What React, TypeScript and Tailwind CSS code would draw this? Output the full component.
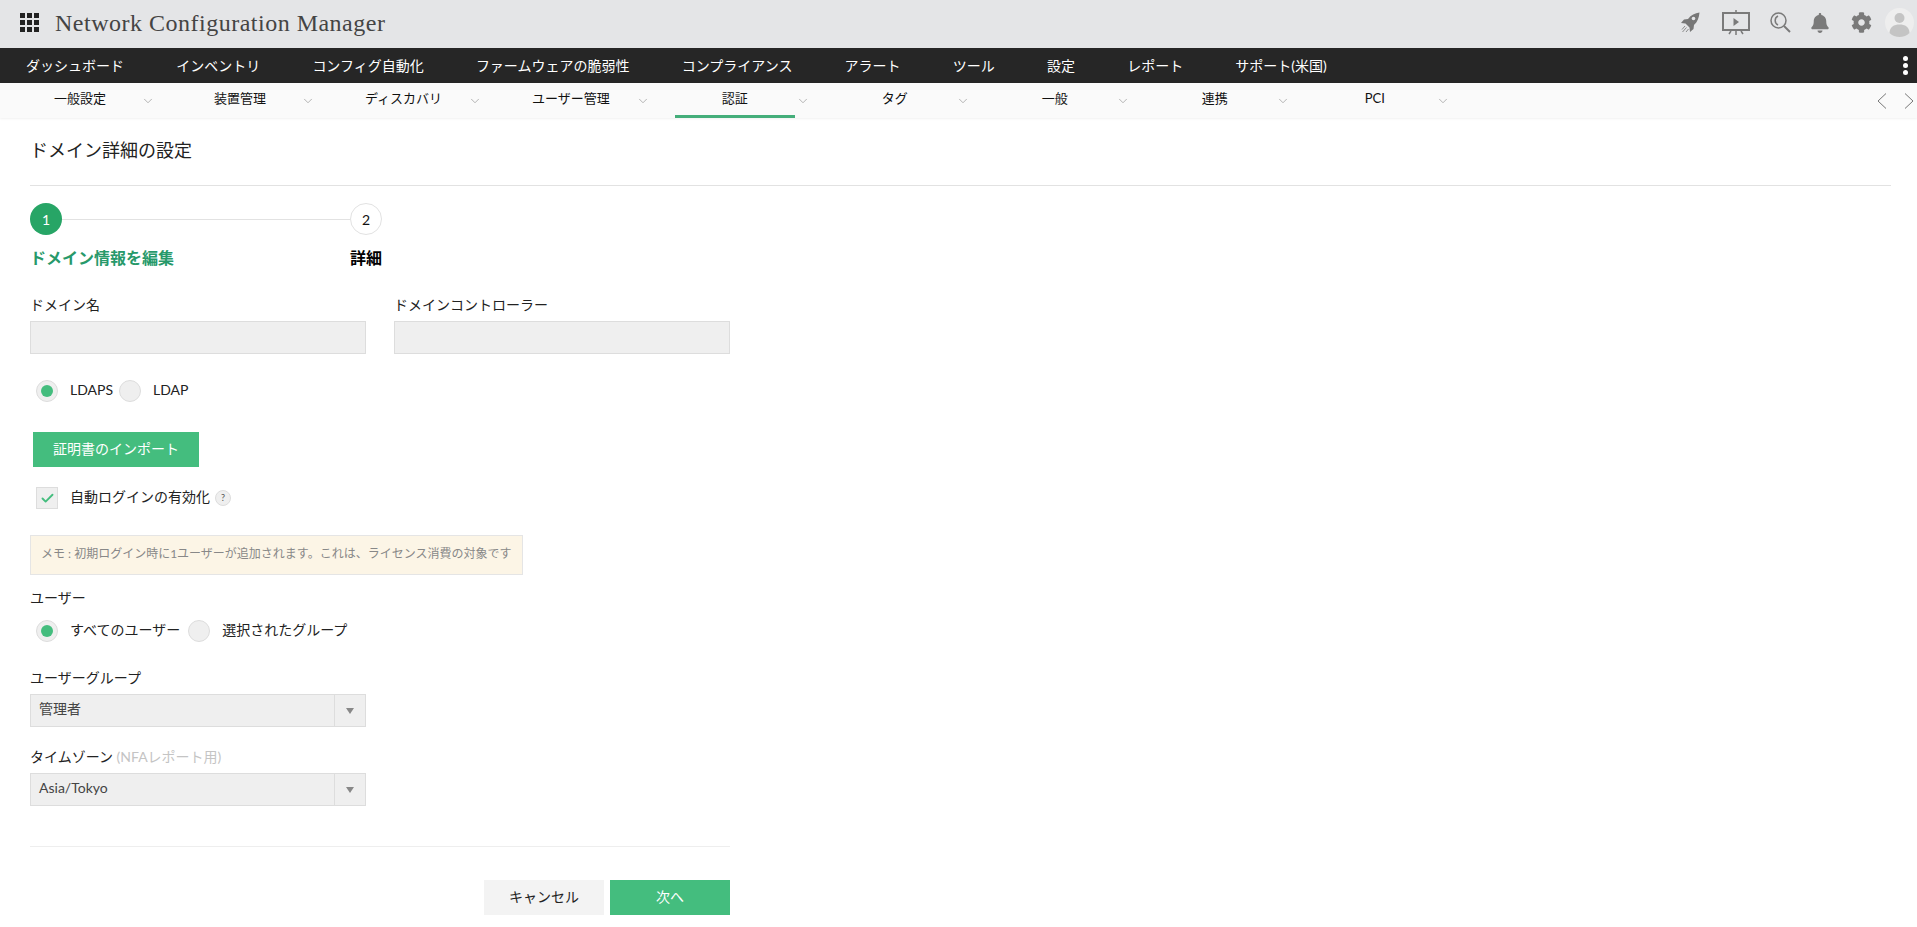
import { FaBell, FaCog } from "react-icons/fa";
import { ChevronDown, Check } from "lucide-react";

const TOP_NAV = [
  "ダッシュボード",
  "インベントリ",
  "コンフィグ自動化",
  "ファームウェアの脆弱性",
  "コンプライアンス",
  "アラート",
  "ツール",
  "設定",
  "レポート",
  "サポート(米国)",
];

const SUB_NAV = ["一般設定", "装置管理", "ディスカバリ", "ユーザー管理", "認証", "タグ", "一般", "連携", "PCI"];

function RocketIcon() {
  return (
    <svg width="20" height="22" viewBox="0 0 20 22" fill="#777777">
      <path d="M19.500 .5C15 1 11 3 8 7L4 7.500 1 11l4.500.5 4 4 .5 4.500 3.500-3 .5-4C17.500 10 19 5.500 19.500 .5z" />
      <circle cx="13.500" cy="6.500" r="1.800" fill="#e4e5e7" />
      <path d="M5 14l-3 3.500M6.500 15.500l-4 4.500M8.500 17l-2.500 3" stroke="#8a8a8a" strokeWidth="1" fill="none" />
    </svg>
  );
}

function PresentationIcon() {
  return (
    <svg width="28" height="26" viewBox="0 0 28 26" fill="none" stroke="#7a7a7a">
      <path d="M14 0v3" strokeWidth="1.500" />
      <rect x="1" y="3" width="26" height="17" strokeWidth="2" />
      <path d="M11.500 8l5.500 4-5.500 4z" fill="#7a7a7a" stroke="none" />
      <path d="M14 20v5M9 21l-2 3M19 21l2 3" strokeWidth="1.500" />
    </svg>
  );
}

function SearchIcon() {
  return (
    <svg width="21" height="21" viewBox="0 0 21 21" fill="none" stroke="#7a7a7a">
      <circle cx="8.500" cy="8.500" r="7.500" strokeWidth="1.500" />
      <path d="M8 4a5 5 0 0 0 0 9" strokeWidth="1.500" />
      <path d="M14 14l6 6" strokeWidth="2" />
    </svg>
  );
}

function AvatarIcon() {
  return (
    <svg width="29" height="29" viewBox="0 0 29 29">
      <circle cx="14.500" cy="14.500" r="14.500" fill="#eeeeee" />
      <circle cx="14.500" cy="10" r="5" fill="#c4c4c4" />
      <path d="M4.500 25c0-6 4.500-8.500 10-8.500s10 2.500 10 8.500c-2.500 2.500-6 4-10 4s-7.500-1.500-10-4z" fill="#c4c4c4" />
    </svg>
  );
}

function PagerArrow({ points }: { points: string }) {
  return (
    <svg width="10" height="16" viewBox="0 0 10 16" fill="none" stroke="#777777">
      <polyline points={points} />
    </svg>
  );
}

function Radio({ checked, label }: { checked?: boolean; label: string }) {
  return (
    <div className="flex h-[22px] items-center">
      <span className="flex h-[22px] w-[22px] items-center justify-center rounded-full border border-[#dddddd] bg-[#efefef]">
        {checked && <span className="h-3 w-3 rounded-full bg-[#44bd7e]" />}
      </span>
      <span className="ml-3 pb-[3px] text-[14px] leading-[16px] text-[#222222]">{label}</span>
    </div>
  );
}

function FieldLabel({ children }: { children: React.ReactNode }) {
  return <div className="h-5 text-[14px] leading-5 text-[#222222]">{children}</div>;
}

function TextBox() {
  return <input aria-label="text" className="mt-[6px] block h-[33px] w-[336px] border border-[#dddddd] bg-[#efefef]" />;
}

function SelectBox({ value }: { value: string }) {
  return (
    <div className="mt-[6px] flex h-[33px] w-[336px] items-center border border-[#dddddd] bg-[#efefef]">
      <span className="flex-1 pb-[3px] pl-2 text-[14px] leading-[16px] text-[#444444]">{value}</span>
      <span className="flex h-full w-[31px] items-center justify-center border-l border-[#dddddd]">
        <span className="h-0 w-0 border-x-[4px] border-t-[6px] border-x-transparent border-t-[#888888]" />
      </span>
    </div>
  );
}

export default function App() {
  return (
    <div className="min-h-screen bg-white font-['Lato','Noto_Sans_CJK_JP',sans-serif]">
      <header className="flex h-12 items-center bg-[#e4e5e7] pb-[3px] pl-5">
        <div className="grid grid-cols-3 gap-[2px]">
          {Array.from({ length: 9 }).map((_, i) => (
            <span key={i} className="h-[5px] w-[5px] bg-[#222222]" />
          ))}
        </div>
        <div className="ml-4 font-['Liberation_Serif',serif] text-[24px] tracking-[0.5px] text-[#444444]">
          Network Configuration Manager
        </div>
        <div className="ml-auto mr-[3px] flex items-center">
          <RocketIcon />
          <span className="ml-[22px]"><PresentationIcon /></span>
          <span className="ml-[20px]"><SearchIcon /></span>
          <FaBell className="ml-[19px] text-[#7a7a7a]" size={20} />
          <FaCog className="ml-[21px] text-[#7a7a7a]" size={21} />
          <span className="ml-[13px]"><AvatarIcon /></span>
        </div>
      </header>

      <nav className="flex h-[35px] items-center gap-[52.200px] bg-[#262626] pl-[26px] text-[14px] text-white">
        {TOP_NAV.map((item) => (
          <span key={item}>{item}</span>
        ))}
        <span className="ml-auto mr-[9px] flex flex-col gap-[2px]">
          <span className="h-[5px] w-[5px] rounded-full bg-white" />
          <span className="h-[5px] w-[5px] rounded-full bg-white" />
          <span className="h-[5px] w-[5px] rounded-full bg-white" />
        </span>
      </nav>

      <div className="flex h-[35px] items-stretch bg-[#fafafa] pl-5 shadow-[0_1px_2px_rgba(0,0,0,0.06)]">
        {SUB_NAV.map((item) => (
          <div key={item} className="flex items-stretch">
            <div
              className={
                "flex min-w-[120px] items-center justify-center border-b-[3px] px-[25px] text-[13px] text-[#111111] " +
                (item === "認証" ? "border-[#44ae7a]" : "border-transparent")
              }
            >
              {item}
            </div>
            <div className="flex w-10 items-center">
              <ChevronDown size={14} strokeWidth={1.250} className="ml-[1px] text-[#999999]" />
            </div>
          </div>
        ))}
        <div className="ml-auto mr-[3px] flex items-center gap-[17px]">
          <PagerArrow points="9,0.500 1,8 9,15.500" />
          <PagerArrow points="1,0.500 9,8 1,15.500" />
        </div>
      </div>

      <main className="px-[30px]">
        <h1 className="flex h-[67px] items-center pb-[2px] text-[18px] font-normal text-[#222222]">ドメイン詳細の設定</h1>
        <div className="w-[1861px] border-t border-[#e2e2e2]" />

        <div className="mt-[17px] flex w-[352px] items-center">
          <span className="flex h-8 w-8 items-center justify-center rounded-full bg-[#27a566] text-[14px] text-white">1</span>
          <span className="h-px flex-1 bg-[#e2e2e2]" />
          <span className="flex h-8 w-8 items-center justify-center rounded-full border border-[#e2e2e2] text-[14px] text-[#111111]">2</span>
        </div>
        <div className="mt-[11px] flex h-[24px] w-[352px] items-center justify-between text-[16px] font-bold">
          <span className="text-[#27996a]">ドメイン情報を編集</span>
          <span className="text-black">詳細</span>
        </div>

        <div className="mt-[25px] flex gap-[28px]">
          <div>
            <FieldLabel>ドメイン名</FieldLabel>
            <TextBox />
          </div>
          <div>
            <FieldLabel>ドメインコントローラー</FieldLabel>
            <TextBox />
          </div>
        </div>

        <div className="ml-[6px] mt-[26px] flex items-center gap-[6px]">
          <Radio checked label="LDAPS" />
          <Radio label="LDAP" />
        </div>

        <button className="ml-[3px] mt-[30px] block h-[35px] w-[166px] bg-[#44bd7e] pb-[2px] text-[14px] text-white">
          証明書のインポート
        </button>

        <div className="ml-[6px] mt-5 flex h-[22px] items-center">
          <span className="flex h-[22px] w-[22px] items-center justify-center border border-[#dddddd] bg-[#efefef]">
            <Check size={15} strokeWidth={3} className="text-[#44bd7e]" />
          </span>
          <span className="ml-3 pb-[3px] text-[14px] leading-[16px] text-[#222222]">自動ログインの有効化</span>
          <span className="ml-[5px] flex h-4 w-4 items-center justify-center rounded-full border border-[#dddddd] bg-[#efefef] text-[9px] text-[#555555]">?</span>
        </div>

        <div className="mt-[26px] flex h-10 w-[493px] items-center whitespace-nowrap border border-[#e5e5e5] bg-[#fcf5e6] pb-[2px] pl-[10px] text-[12px] text-[#888888]">
          メモ : 初期ログイン時に1ユーザーが追加されます。これは、ライセンス消費の対象です
        </div>

        <div className="mt-[13px] h-5 text-[14px] leading-5 text-[#222222]">ユーザー</div>
        <div className="ml-[6px] mt-[12px] flex items-center gap-2">
          <Radio checked label="すべてのユーザー" />
          <Radio label="選択されたグループ" />
        </div>

        <div className="mt-[26px]">
          <FieldLabel>ユーザーグループ</FieldLabel>
          <SelectBox value="管理者" />
        </div>

        <div className="mt-5">
          <FieldLabel>
            タイムゾーン <span className="text-[14px] text-[#c4c4c4]">(NFAレポート用)</span>
          </FieldLabel>
          <SelectBox value="Asia/Tokyo" />
        </div>

        <div className="mt-10 w-[700px] border-t border-[#eeeeee]" />

        <div className="mt-[33px] flex w-[700px] justify-end gap-[6px]">
          <button className="h-[35px] w-[120px] bg-[#f3f3f3] pb-[2px] text-[14px] text-[#222222]">キャンセル</button>
          <button className="h-[35px] w-[120px] bg-[#44bd7e] pb-[2px] text-[14px] text-white">次へ</button>
        </div>
      </main>
    </div>
  );
}
